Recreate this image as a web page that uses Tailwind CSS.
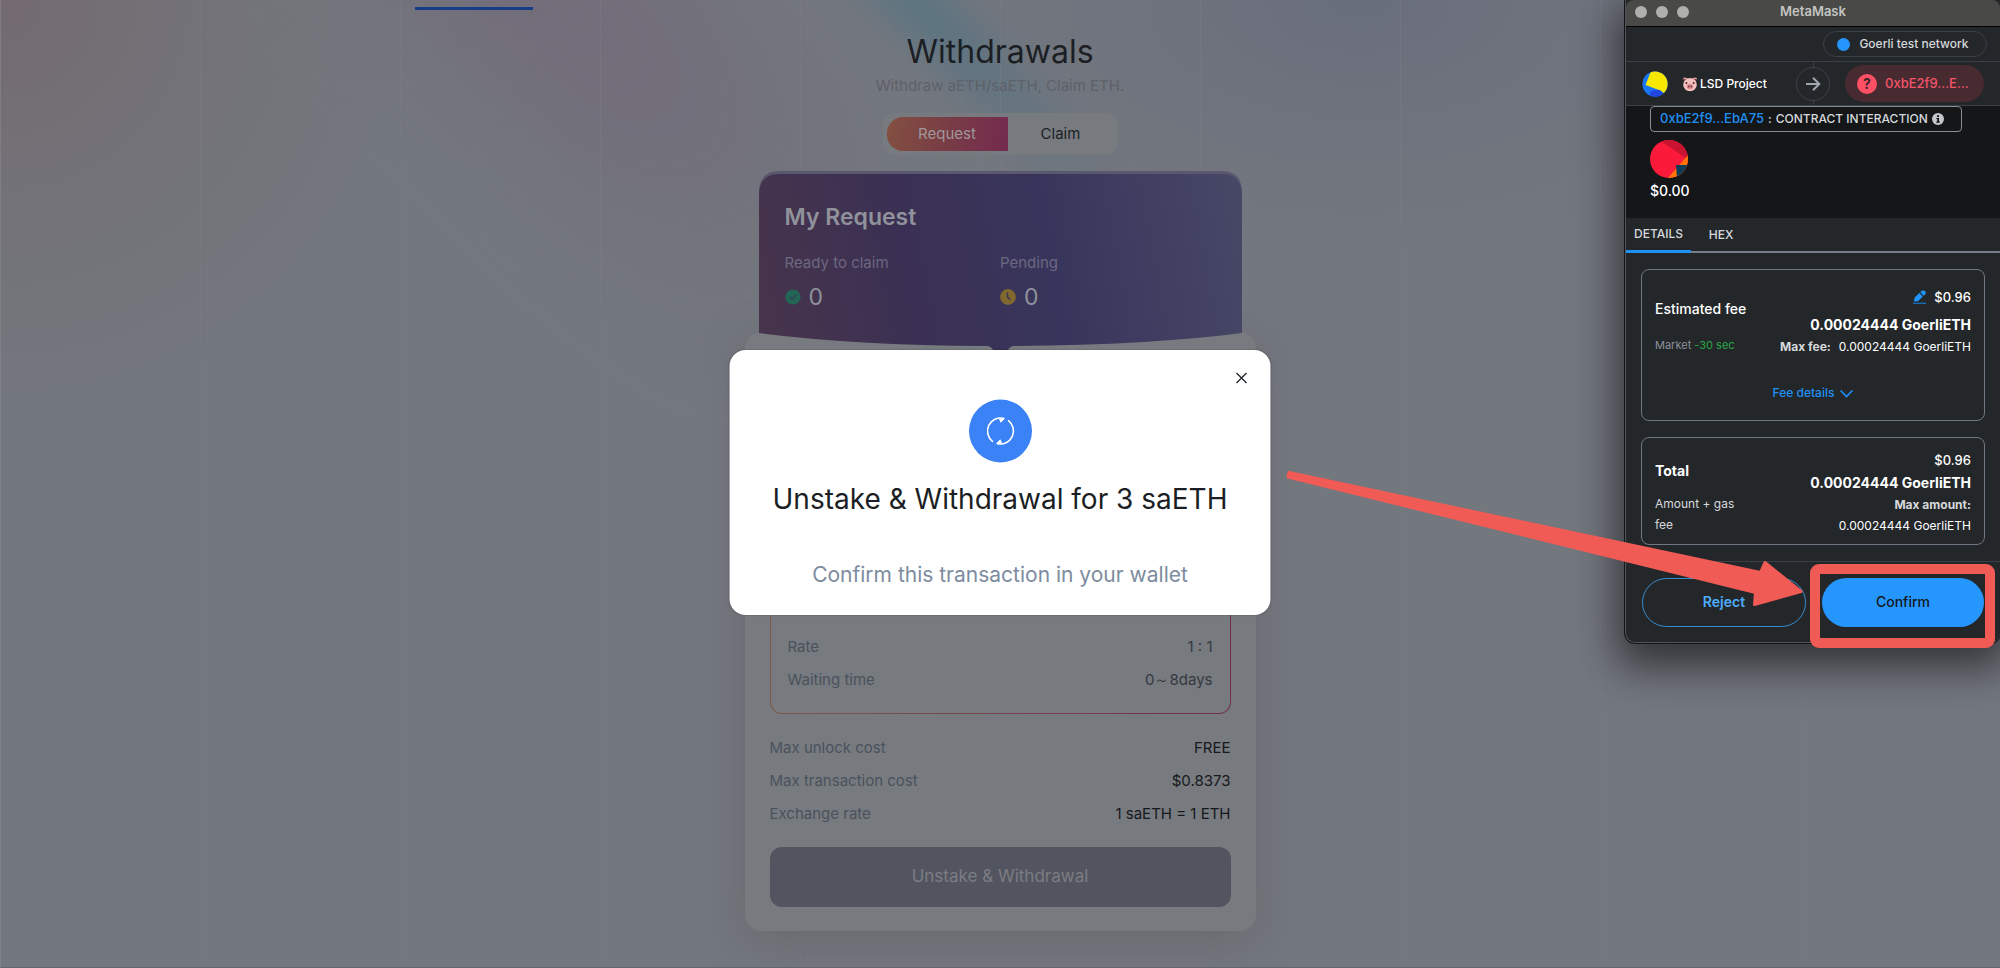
<!DOCTYPE html>
<html lang="en">
<head>
<meta charset="utf-8">
<meta name="viewport" content="width=device-width, initial-scale=1">
<title>Withdrawals</title>
<script src="https://cdn.jsdelivr.net/npm/@tailwindcss/browser@4"></script>
</head>
<body class="relative min-h-screen overflow-hidden bg-[#73777e] font-['Inter',sans-serif] text-[#1b1f24]">

<!-- Page backdrop: soft colour washes and faint column rules -->
<div aria-hidden="true" class="absolute inset-0 bg-[radial-gradient(ellipse_420px_420px_at_0%_0%,#736a70_0%,#73707599_50%,transparent_100%),radial-gradient(ellipse_460px_260px_at_68%_0%,#696e7c_0%,#6d717d99_50%,transparent_100%)]"></div>
<div aria-hidden="true" class="absolute inset-0 overflow-hidden">
  <div class="absolute top-[-120px] left-1/2 h-[560px] w-[200px] origin-top -translate-x-[660px] -rotate-45 bg-linear-to-b from-[#736b79] via-[#726d7a] to-transparent blur-3xl"></div>
  <div class="absolute top-[-90px] left-1/2 h-[400px] w-[56px] origin-top -translate-x-[206px] -rotate-45 bg-linear-to-b from-[#5a7680] via-[#5f7481] to-transparent blur-lg"></div>
</div>
<div aria-hidden="true" class="absolute inset-0 border-b border-l border-b-[#55565a] border-l-[#8b8d92] bg-[repeating-linear-gradient(90deg,transparent_0_199px,#797c82_199px_200px)] opacity-50"></div>

<nav aria-label="Primary" class="relative h-[10px] pt-[7px] pl-[415px]">
  <div class="h-[3px] w-[118px] bg-[#183d87]"></div>
</nav>

<main class="relative mx-auto w-full max-w-[511px] pb-9">
  <header class="flex flex-col items-center pt-[21px]">
    <h1 class="text-[32px] leading-[42px]">Withdrawals</h1>
    <p class="mt-0.5 text-[15px] leading-[22px] text-[#5e6168]">Withdraw aETH/saETH, Claim ETH.</p>
    <div class="mt-4 flex h-[42px] w-[235px] rounded-xl bg-[#777b7f] p-1 text-[15px]">
      <button type="button" class="w-[121px] rounded-l-2xl bg-linear-100 from-[#835040] via-[#783c45] to-[#742a4e] text-[#a0969a]">Request</button>
      <button type="button" class="flex-1">Claim</button>
    </div>
  </header>

  <section aria-labelledby="my-request" class="relative z-10 mx-[14px] mt-4 h-[180px] text-[#90929b]">
    <svg aria-hidden="true" class="absolute inset-0 h-full w-full" viewBox="0 0 482 180" preserveAspectRatio="none">
      <defs>
        <linearGradient id="plum" gradientUnits="userSpaceOnUse" x1="0" y1="130" x2="482" y2="40">
          <stop offset="0" stop-color="#47344c"/>
          <stop offset=".3" stop-color="#3b3053"/>
          <stop offset=".6" stop-color="#38355c"/>
          <stop offset="1" stop-color="#474766"/>
        </linearGradient>
      </defs>
      <path fill="#59586f" d="M0 22Q0 0 20 0H462Q482 0 482 22V100H0Z"/>
      <path fill="url(#plum)" d="M0 24Q0 3 20 3H462Q482 3 482 24V162Q390 174 255 175Q250 175 248 180H234Q232 175 227 175Q92 174 0 162Z"/>
    </svg>
    <div class="relative px-[26px] pt-8">
      <h2 id="my-request" class="text-[23px] leading-7 font-semibold">My Request</h2>
      <dl class="mt-5 grid grid-cols-2">
        <div>
          <dt class="text-[15px] leading-6 text-[#6b6880]">Ready to claim</dt>
          <dd class="mt-2 flex items-center gap-2 text-[23px] leading-7">
            <svg class="size-4" viewBox="0 0 16 16" fill="none"><circle cx="8" cy="8" r="7.6" fill="#236655"/><path d="M4.800 8.200 7.200 10.300 11.300 5.900" stroke="#33415a" stroke-width="1.500"/></svg>0
          </dd>
        </div>
        <div>
          <dt class="text-[15px] leading-6 text-[#6b6880]">Pending</dt>
          <dd class="mt-2 flex items-center gap-2 text-[23px] leading-7">
            <svg class="size-4" viewBox="0 0 16 16" fill="none"><circle cx="8" cy="8" r="7.900" fill="#80682f"/><path d="M7.500 3.500V8.200L10.500 10.600" stroke="#3b3552" stroke-width="1.500"/></svg>0
          </dd>
        </div>
      </dl>
    </div>
  </section>

  <section aria-label="Unstake" class="-mt-[19px] flex flex-col rounded-2xl bg-[#777a7e] px-[25px] pt-[70px] pb-6 shadow-[0_10px_44px_rgba(90,90,92,0.45)]">
    <div class="h-[312px] rounded-xl bg-linear-to-r from-[#7d5748] via-[#784350] to-[#732e50] p-px">
      <dl class="flex h-full flex-col justify-end gap-[9px] rounded-[11px] bg-[#777a7e] px-[17px] pb-[21px] text-[15px] leading-6 text-[#343941]">
        <div class="flex justify-between"><dt class="text-[#4a525d]">Rate</dt><dd>1 : 1</dd></div>
        <div class="flex justify-between"><dt class="text-[#4a525d]">Waiting time</dt><dd>0～8days</dd></div>
      </dl>
    </div>
    <dl class="mt-[22px] flex flex-col gap-[9px] text-[15px] leading-6 text-[#15181c]">
      <div class="flex justify-between"><dt class="text-[#4a525d]">Max unlock cost</dt><dd>FREE</dd></div>
      <div class="flex justify-between"><dt class="text-[#4a525d]">Max transaction cost</dt><dd>$0.8373</dd></div>
      <div class="flex justify-between"><dt class="text-[#4a525d]">Exchange rate</dt><dd>1 saETH = 1 ETH</dd></div>
    </dl>
    <button type="button" class="mt-[21px] h-[60px] rounded-xl bg-[#52555f] text-[17px] text-[#7b7d83]">Unstake &amp; Withdrawal</button>
  </section>
</main>

<!-- Transaction dialog -->
<div role="dialog" aria-labelledby="dialog-title" class="absolute top-[350px] left-1/2 z-20 flex w-[541px] max-w-full -translate-x-1/2 flex-col items-center rounded-2xl bg-white pt-[49px] pb-6 shadow-[0_0_2px_rgba(0,0,0,0.3)]">
  <button type="button" aria-label="Close" class="absolute top-4 right-[17px] grid size-6 place-items-center">
    <svg class="size-3" viewBox="0 0 12 12" stroke="#23272d" stroke-width="1.400"><path d="M1 1 11 11M11 1 1 11"/></svg>
  </button>
  <svg aria-hidden="true" class="size-16" viewBox="0 0 64 64" fill="none">
    <circle cx="32" cy="32" r="31.500" fill="#3b82f6"/>
    <g stroke="#fff" stroke-width="1.600" stroke-linecap="round" stroke-linejoin="round">
      <path d="M24 42.300A13 13 0 0 1 35 19.400"/>
      <path d="M40 21.700A13 13 0 0 1 29 44.600"/>
    </g>
    <path fill="#fff" stroke="#fff" stroke-linejoin="round" d="M31 19.800 35.800 19.600 32.300 23.200ZM33 44.200 28.200 44.400 31.700 40.800Z"/>
  </svg>
  <h2 id="dialog-title" class="mt-4 text-[28px] leading-10">Unstake &amp; Withdrawal for 3 saETH</h2>
  <p class="mt-10 text-[21px] leading-8 text-[#7d8c9e]">Confirm this transaction in your wallet</p>
</div>

<!-- Wallet extension window -->
<aside aria-label="MetaMask" class="absolute top-0 right-0 z-30 flex w-[375px] flex-col rounded-b-[10px] border-b border-l border-[#505356] bg-[#24272a] text-[13px] text-white shadow-[0_0_0_1px_#15161a,0_16px_40px_8px_rgba(30,30,34,0.75)]">
  <div class="relative flex h-[27px] items-center justify-center rounded-t-lg border-b border-black bg-[#494a47] pb-0.5">
    <div class="absolute left-[9px] flex gap-[9px]">
      <span class="size-3 rounded-full bg-[#afb0ae]"></span><span class="size-3 rounded-full bg-[#afb0ae]"></span><span class="size-3 rounded-full bg-[#afb0ae]"></span>
    </div>
    <span class="text-[13px] font-semibold text-[#c3c4c2]">MetaMask</span>
  </div>

  <div class="flex h-[35px] items-center justify-end border-b border-[#3b4046] pr-[13px]">
    <button type="button" class="flex h-[26px] w-[164px] items-center justify-center gap-[9px] rounded-full border border-[#3b4046] pr-1 text-[12px] font-medium text-[#d6d9dc]">
      <span class="size-[13px] rounded-full bg-[#2696ff]"></span>Goerli test network
    </button>
  </div>

  <div class="relative flex h-11 items-center border-b border-[#3b4046] pr-4 pl-4">
    <svg aria-hidden="true" class="size-[26px]" viewBox="0 0 26 26">
      <clipPath id="av1"><circle cx="13" cy="13" r="12.600"/></clipPath>
      <g clip-path="url(#av1)"><path fill="#1876f2" d="M0 0H26V26H0Z"/><path fill="#f8e800" d="M9 0 3.500 14 19.500 20 26 26V0Z"/><path fill="#2245e0" d="M9 20 17 18.700 22 23V26H7Z"/></g>
    </svg>
    <svg aria-hidden="true" class="ml-[14px] size-4" viewBox="0 0 16 16">
      <path fill="#e69a9c" d="M1 2Q4 .5 6 3L3 7ZM15 2Q12 .5 10 3L13 7Z"/>
      <path fill="#4a2c2c" d="M2 3 4.500 3.500 2.500 6ZM14 3 11.500 3.500 13.500 6Z"/>
      <ellipse cx="8" cy="8.700" rx="6.800" ry="6.600" fill="#f3c0bd"/>
      <ellipse cx="8" cy="10.400" rx="3.300" ry="2.500" fill="#d9878b"/>
      <g fill="#45262a"><circle cx="4.400" cy="7" r="1"/><circle cx="11.600" cy="7" r="1"/><ellipse cx="6.800" cy="10.400" rx=".6" ry="1"/><ellipse cx="9.200" cy="10.400" rx=".6" ry="1"/></g>
    </svg>
    <span class="ml-0.5 text-[12px] font-medium">LSD Project</span>
    <div class="absolute left-[170px] grid h-full w-[34px] place-items-center">
      <span class="absolute h-full w-px bg-[#3b4046]"></span>
      <span class="relative grid size-[34px] place-items-center rounded-full border border-[#3b4046] bg-[#24272a]">
        <svg class="size-4" viewBox="0 0 16 16" fill="none" stroke="#9fa6ae" stroke-width="2"><path d="M1 8H14M8 1.700 14.300 8 8 14.300"/></svg>
      </span>
    </div>
    <button type="button" class="ml-auto flex h-[37px] w-[139px] items-center gap-2 rounded-full bg-[#472b31] pl-3 text-[13px] font-medium text-[#f4536a]">
      <span class="grid size-5 place-items-center rounded-full bg-[#ff5065] text-[14px] leading-5 font-bold text-[#3a2228]">?</span>0xbE2f9...E...
    </button>
  </div>

  <div class="h-28 bg-[#141618] pl-6">
    <div class="flex h-[26px] w-[312px] items-center gap-1 rounded border border-[#848c96] pl-[9px] text-[12px] font-medium text-[#d6d9dc]">
      <a href="#" class="text-[13px] text-[#2090f4]">0xbE2f9...EbA75</a><span>:</span><span>CONTRACT INTERACTION</span>
      <svg aria-hidden="true" class="size-3" viewBox="0 0 12 12"><circle cx="6" cy="6" r="6" fill="#c3c7cc"/><path fill="#141618" d="M5 2.200H7V4H5ZM4.300 5H7V8.600H7.800V9.800H4.300V8.600H5.200V6.100H4.300Z"/></svg>
    </div>
    <svg aria-hidden="true" class="mt-2 size-[38px]" viewBox="0 0 38 38">
      <clipPath id="av2"><circle cx="19" cy="19" r="19"/></clipPath>
      <g clip-path="url(#av2)"><path fill="#fb1a3a" d="M0 0H38V38H0Z"/><path fill="#c81431" d="M9 0 36 18 38 16V0Z"/><path fill="#ff7507" d="M38 15 18 38H38Z"/><path fill="#0c3c57" d="M26 25H38V38H27Z"/></g>
    </svg>
    <div class="mt-0.5 text-[14px] leading-[22px] font-medium">$0.00</div>
  </div>

  <div role="tablist" class="flex h-[35px] border-b-2 border-[#777e88] text-[12px] font-medium text-[#d6d9dc]">
    <button type="button" role="tab" aria-selected="true" class="-mb-0.5 w-[65px] border-b-3 border-[#2090f4]">DETAILS</button>
    <button type="button" role="tab" aria-selected="false" class="w-[60px]">HEX</button>
  </div>

  <section class="mx-[15px] mt-4 flex h-[152px] flex-col rounded-lg border border-[#6f7782] px-[13px] pt-[15px]">
    <div class="flex justify-between">
      <div class="pt-3">
        <div class="text-[14px] leading-6 font-medium">Estimated fee</div>
        <div class="mt-3 text-[11px] leading-6 text-[#8b929c]">Market <span class="text-[#28a745]">-30 sec</span></div>
      </div>
      <div class="text-right">
        <div class="flex items-center justify-end gap-[7px] text-[13px] leading-6 font-medium">
          <svg aria-label="Edit fee" class="size-[14px]" viewBox="0 0 14 14" fill="#1f95ff"><path d="M1 11.500 1.500 7.800 6.300 3 9.800 6.500 5 11.200ZM7.300 2.200 8.700.8Q10 0 11.400.8 13.500 1.800 12.600 4L10.700 5.700Z"/><path fill="#176bb5" d="M0 12.600H13V14H0Z"/></svg>
          $0.96
        </div>
        <div class="mt-1 text-[14px] leading-6 font-bold">0.00024444 GoerliETH</div>
        <div class="flex justify-end gap-2 text-[12px] leading-5"><b class="text-[#d6d9dc]">Max fee:</b>0.00024444 GoerliETH</div>
      </div>
    </div>
    <button type="button" class="mt-6 flex items-center justify-center gap-1.5 text-[12px] leading-6 font-medium text-[#2090f4]">Fee details
      <svg aria-hidden="true" class="size-[13px]" viewBox="0 0 13 13" fill="none" stroke="currentColor" stroke-width="1.600"><path d="M.6 3.500 6.500 9.500 12.400 3.500"/></svg>
    </button>
  </section>

  <section class="mx-[15px] mt-4 flex h-[108px] justify-between rounded-lg border border-[#6f7782] px-[13px] pt-[10px]">
    <div class="w-24 pt-[11px]">
      <div class="text-[14px] leading-6 font-bold">Total</div>
      <div class="mt-[10px] text-[12px] leading-[21px] text-[#d6d9dc]">Amount + gas<br>fee</div>
    </div>
    <div class="text-right">
      <div class="text-[13px] leading-6 font-medium">$0.96</div>
      <div class="text-[14px] leading-[22px] font-bold">0.00024444 GoerliETH</div>
      <div class="text-[12px] leading-[21px] font-bold text-[#d6d9dc]">Max amount:</div>
      <div class="text-[12px] leading-[21px]">0.00024444 GoerliETH</div>
    </div>
  </section>

  <footer class="mt-4 flex h-[81px] gap-4 border-t border-[#3b4046] px-4 pt-4 text-[14px] font-semibold">
    <button type="button" class="h-[49px] flex-1 rounded-full border border-[#3a8ccf] pb-0.5 text-[#4cadfb]">Reject</button>
    <button type="button" class="h-[49px] flex-1 rounded-full bg-[#2696ff] pb-0.5 font-medium text-[#141618]">Confirm</button>
  </footer>

  <!-- Callout frame and arrow pointing at Confirm -->
  <div aria-hidden="true" class="pointer-events-none absolute right-[5px] -bottom-[6px] h-[84px] w-[185px] rounded-[9px] border-10 border-[#f15b55]"></div>
  <svg aria-hidden="true" class="pointer-events-none absolute top-[465px] right-[195px] h-[145px] w-[520px]" viewBox="1285 465 520 145" fill="#f15b55">
    <path stroke="#f15b55" stroke-width="3" stroke-linejoin="round" d="M1289 472.500 1760.500 572.500 1765 562.500 1801 591.500 1754.500 604.500 1755.500 592.500 1288 477Z"/>
  </svg>
</aside>
</body>
</html>
